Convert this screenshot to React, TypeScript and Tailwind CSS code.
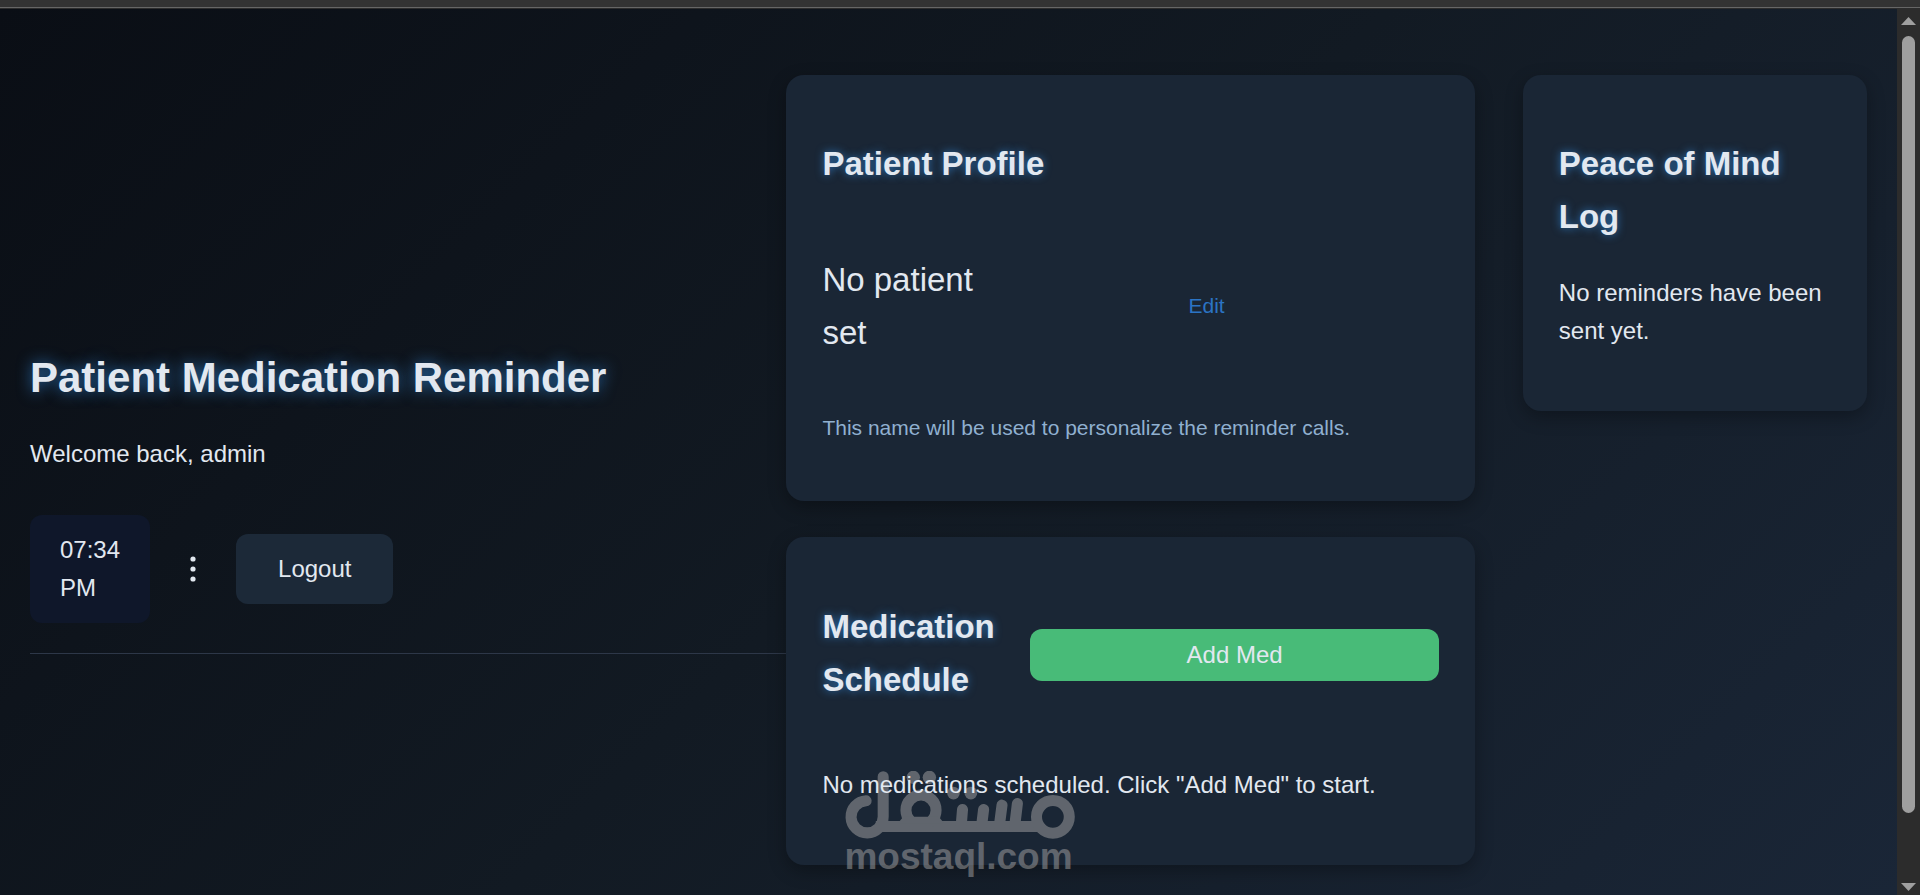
import { useState } from "react"

interface LogEntry {
  id: string
  message: string
}

interface Medication {
  id: string
  name: string
  time: string
}

const logEntries: LogEntry[] = []
const medications: Medication[] = []

const cardClass = "bg-[#1a2635] rounded-[18px] px-9 shadow-[0_6px_18px_rgba(0,0,0,0.3)]"
const cardTitleClass =
  "text-[33px] leading-[53px] font-bold text-[#e2e8f0] [text-shadow:0_0_8px_rgba(49,130,206,0.8)]"

function Watermark() {
  return (
    <div className="absolute left-[58px] top-[234px] w-[231px] opacity-50 pointer-events-none text-[#a5a5a5]">
      <svg viewBox="45 48 690 204" className="block w-full" role="img" aria-label="مستقل">
        <g fill="none" stroke="currentColor" strokeWidth="33" strokeLinecap="round">
          <path d="M111 137A48 48 0 1 0 162 185V65" />
          <path d="M140 214H630" strokeLinecap="butt" />
          <circle cx="275" cy="165" r="45" />
          <circle cx="669" cy="185" r="49" />
          <path d="M399 163L395 212M462 163L456 212M517 150L509 212M563 145L555 212" />
        </g>
        <g fill="currentColor">
          <circle cx="252" cy="67" r="20" />
          <circle cx="300" cy="67" r="20" />
          <circle cx="372" cy="114" r="19" />
          <circle cx="424" cy="114" r="19" />
          <path d="M222 185L206 204H344L328 185z" />
        </g>
      </svg>
      <div className="text-[37px] leading-[36px] font-bold">mostaql.com</div>
    </div>
  )
}

function Scrollbar() {
  return (
    <div className="w-[23px] shrink-0 bg-[#2c2c2c] flex flex-col items-center pt-2 pb-1" aria-hidden="true">
      <svg width="15" height="8" viewBox="0 0 15 8" className="shrink-0" fill="#9f9f9f">
        <path d="M7.5 0L15 8H0z" />
      </svg>
      <div className="flex-[847] w-[13px] pt-[11px] flex flex-col">
        <div className="flex-[777] rounded-full bg-[#9f9f9f]" />
        <div className="flex-[70]" />
      </div>
      <svg width="15" height="8" viewBox="0 0 15 8" className="shrink-0" fill="#9f9f9f">
        <path d="M0 0H15L7.5 8z" />
      </svg>
    </div>
  )
}

export default function App() {
  const [patientName] = useState("")

  return (
    <div className="min-h-screen flex flex-col font-['Liberation_Sans',Arial,sans-serif] text-[24px] leading-[38px] text-[#e2e8f0]">
      <div className="h-[9px] shrink-0 bg-[#333333] flex flex-col justify-end">
        <div className="h-px bg-[#666666]" />
        <div className="h-px bg-[#2c2c2c]" />
      </div>

      <div className="flex-1 flex">
        <div className="flex-1 flex items-center pt-[66px] pb-[30px] px-[30px] bg-linear-135 from-[#0a0e15] via-[#121a23] to-[#1a2637]">
          <header className="flex-[7] min-w-0 border-b border-[#2d3748] pt-[58px] pb-[30px]">
            <h1 className="text-[42px] leading-[66px] font-bold [text-shadow:0_0_15px_rgba(49,130,206,0.8)]">
              Patient Medication Reminder
            </h1>
            <p className="mt-6">Welcome back, admin</p>
            <div className="mt-[42px] flex items-center gap-[36px]">
              <div className="rounded-xl bg-[#0f172a] px-[30px] py-4">
                07:34
                <br />
                PM
              </div>
              <button aria-label="More options" className="w-[14px] flex justify-center">
                <svg width="6" height="26" viewBox="0 0 6 26" fill="currentColor">
                  <circle cx="3" cy="3" r="2.6" />
                  <circle cx="3" cy="13" r="2.6" />
                  <circle cx="3" cy="23" r="2.6" />
                </svg>
              </button>
              <button className="rounded-xl bg-[#1c2938] px-[42px] py-4">Logout</button>
            </div>
          </header>

          <main className="flex-[10] min-w-0 self-stretch grid grid-cols-[2fr_1fr] gap-12 items-start">
            <div className="flex flex-col gap-9">
              <section className={`pt-[62px] pb-[56px] ${cardClass}`}>
                <h2 className={cardTitleClass}>Patient Profile</h2>
                <div className="mt-[63px] flex items-center">
                  <span className="w-[152px] shrink-0 text-[33px] leading-[53px]">
                    {patientName || "No patient set"}
                  </span>
                  <button className="flex-1 text-[21px] leading-[34px] text-[#2b74c4]">Edit</button>
                </div>
                <p className="mt-[52px] text-[21px] leading-[34px] text-[#90b0d0]">
                  This name will be used to personalize the reminder calls.
                </p>
              </section>

              <section className={`relative pt-[63px] pb-[61px] ${cardClass}`}>
                <Watermark />
                <div className="flex items-center gap-9">
                  <h2 className={`w-[172px] shrink-0 mb-1 ${cardTitleClass}`}>Medication Schedule</h2>
                  <button className="flex-1 rounded-xl bg-[#48bb78] py-[7px]">Add Med</button>
                </div>
                {medications.length === 0 ? (
                  <p className="relative mt-14">No medications scheduled. Click "Add Med" to start.</p>
                ) : (
                  <ul className="relative mt-14">
                    {medications.map((med) => (
                      <li key={med.id}>
                        {med.name} {med.time}
                      </li>
                    ))}
                  </ul>
                )}
              </section>
            </div>

            <section className={`pt-[62px] pb-[61px] ${cardClass}`}>
              <h2 className={cardTitleClass}>Peace of Mind Log</h2>
              {logEntries.length === 0 ? (
                <p className="mt-[31px]">No reminders have been sent yet.</p>
              ) : (
                <ul className="mt-[31px]">
                  {logEntries.map((entry) => (
                    <li key={entry.id}>{entry.message}</li>
                  ))}
                </ul>
              )}
            </section>
          </main>
        </div>
        <Scrollbar />
      </div>
    </div>
  )
}
